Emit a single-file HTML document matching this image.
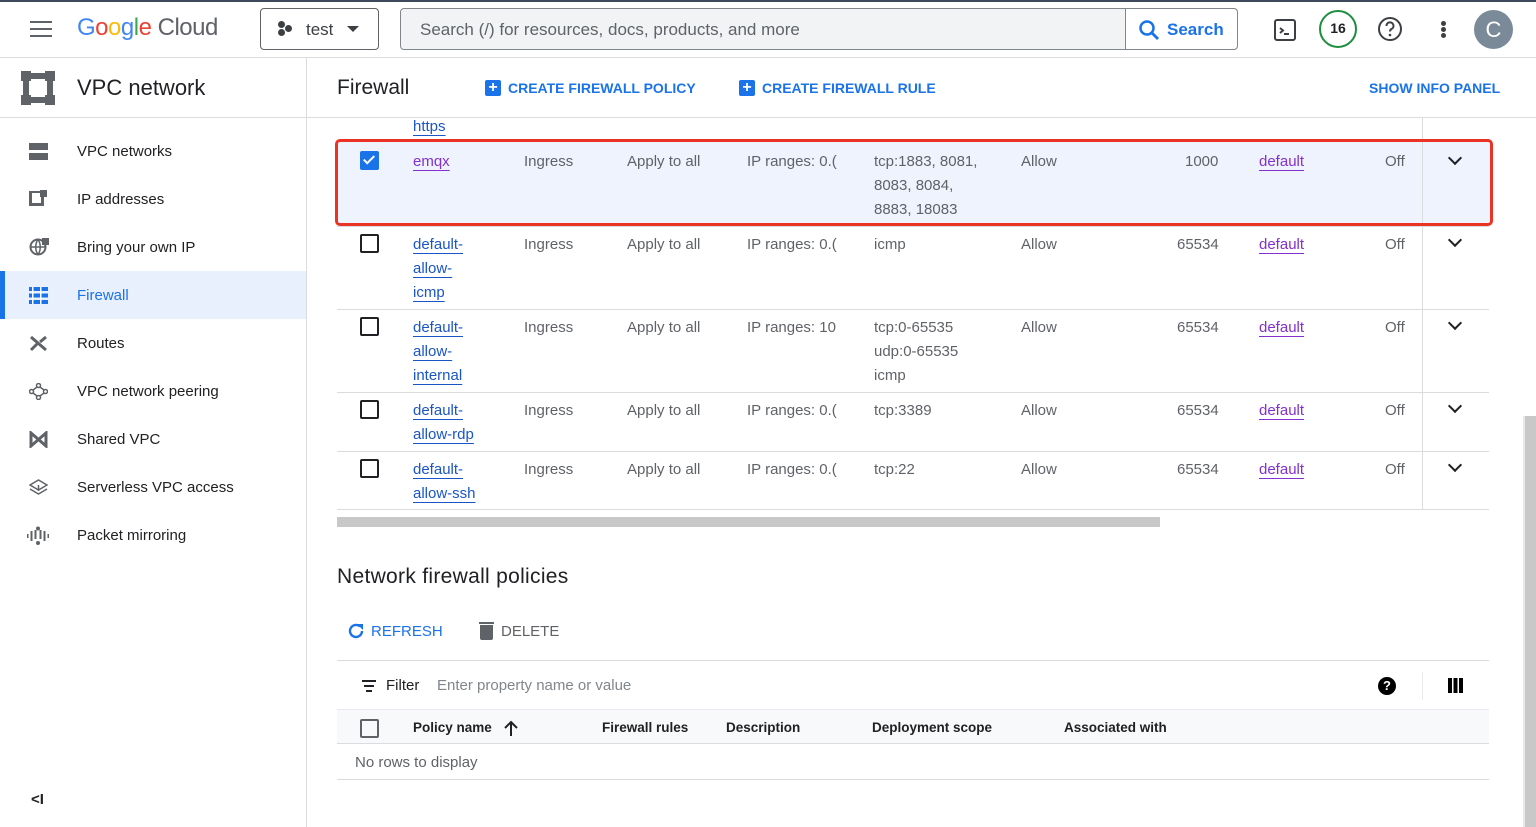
<!DOCTYPE html>
<html><head><meta charset="utf-8"><style>
*{box-sizing:border-box;margin:0;padding:0}
body{width:1536px;height:827px;overflow:hidden;background:#fff;font-family:"Liberation Sans",Arial,sans-serif;color:#202124;position:relative}
.a{position:absolute;white-space:nowrap}
.t{position:absolute;white-space:nowrap;font-size:15px;line-height:24px;color:#5f6368;margin-top:1px}
.lk{color:#1a55c8;text-decoration:underline;text-underline-offset:4px}
.vl{color:#8430ce;text-decoration:underline;text-underline-offset:4px}
.hl{position:absolute;height:1px;background:#dadce0}
.cb{position:absolute;width:19px;height:19px;border:2px solid #202124;border-radius:2px}
.chev{position:absolute;width:10px;height:10px;border-right:2px solid #202124;border-bottom:2px solid #202124;transform:rotate(45deg)}
.nav{position:absolute;left:77px;font-size:15px;color:#202124;margin-top:1px}
.ico{position:absolute;left:29px;width:19px;height:17px}
.bh{position:absolute;white-space:nowrap;font-size:14px;color:#1a73e8;font-weight:bold}
.th{position:absolute;white-space:nowrap;font-size:13.5px;font-weight:bold;color:#202124}
</style></head><body>
<div class="a" style="left:0;top:0;width:1536px;height:2px;background:#3c4a5c"></div>
<!-- top bar -->
<div class="a" style="left:30px;top:21px;width:22px;height:2px;background:#5f6368;box-shadow:0 7px 0 #5f6368,0 14px 0 #5f6368"></div>
<div class="a" style="left:77px;top:14px;font-size:24px;letter-spacing:-0.5px"><span style="color:#4285f4">G</span><span style="color:#ea4335">o</span><span style="color:#fbbc04">o</span><span style="color:#4285f4">g</span><span style="color:#34a853">l</span><span style="color:#ea4335">e</span> <span style="color:#5f6368">Cloud</span></div>
<div class="a" style="left:260px;top:8px;width:119px;height:42px;border:1px solid #5f6368;border-radius:4px"></div>
<div class="a" style="left:278px;top:21px;width:7px;height:7px;border-radius:50%;background:#3c4043;box-shadow:7px 4px 0 #3c4043,0 8px 0 #3c4043"></div>
<div class="a" style="left:306px;top:20px;font-size:17px;color:#3c4043">test</div>
<div class="a" style="left:347px;top:26px;border-left:6px solid transparent;border-right:6px solid transparent;border-top:6px solid #3c4043"></div>
<div class="a" style="left:400px;top:8px;width:838px;height:42px;border:1px solid #80868b;border-radius:4px;background:#f1f3f4"></div>
<div class="a" style="left:1125px;top:9px;width:112px;height:40px;background:#fff;border-left:1px solid #80868b;border-radius:0 4px 4px 0"></div>
<div class="a" style="left:420px;top:20px;font-size:17px;color:#5f6368">Search (/) for resources, docs, products, and more</div>
<svg class="a" style="left:1137px;top:18px" width="24" height="24" viewBox="0 0 24 24"><circle cx="10" cy="10" r="6.5" fill="none" stroke="#1a73e8" stroke-width="2.5"/><line x1="15" y1="15" x2="21" y2="21" stroke="#1a73e8" stroke-width="2.8"/></svg>
<div class="a" style="left:1167px;top:20px;font-size:17px;color:#1a73e8;font-weight:bold">Search</div>
<svg class="a" style="left:1273px;top:18px" width="24" height="24" viewBox="0 0 24 24"><rect x="2" y="2" width="20" height="20" rx="2" fill="none" stroke="#3c4043" stroke-width="2"/><path d="M7 10l3 2.5-3 2.5M11 16h5" stroke="#3c4043" stroke-width="2" fill="none"/></svg>
<div class="a" style="left:1319px;top:10px;width:38px;height:38px;border:2.5px solid #1e8e3e;border-radius:50%;text-align:center;line-height:33px;font-size:14px;font-weight:bold;color:#202124">16</div>
<svg class="a" style="left:1377px;top:16px" width="26" height="26" viewBox="0 0 26 26"><circle cx="13" cy="13" r="11" fill="none" stroke="#3c4043" stroke-width="2"/><path d="M9.5 10a3.5 3.5 0 1 1 5 3c-1.2.7-1.5 1.3-1.5 2.5" fill="none" stroke="#3c4043" stroke-width="2"/><circle cx="13" cy="19" r="1.3" fill="#3c4043"/></svg>
<div class="a" style="left:1441px;top:21px;width:5px;height:5px;border-radius:50%;background:#3c4043;box-shadow:0 6px 0 #3c4043,0 12px 0 #3c4043"></div>
<div class="a" style="left:1474px;top:10px;width:39px;height:39px;border-radius:50%;background:#7a8a98;color:#fff;text-align:center;line-height:39px;font-size:22px">C</div>
<div class="hl" style="left:0;top:57px;width:1536px;background:#dadce0"></div>
<!-- sidebar -->
<div class="a" style="left:306px;top:58px;width:1px;height:769px;background:#dadce0"></div>
<svg class="a" style="left:21px;top:71px" width="34" height="34" viewBox="0 0 34 34" fill="#5f6368"><rect x="0" y="0" width="10" height="10"/><rect x="24" y="0" width="10" height="10"/><rect x="0" y="24" width="10" height="10"/><rect x="24" y="24" width="10" height="10"/><rect x="2" y="10" width="6" height="14"/><rect x="26" y="10" width="6" height="14"/><rect x="10" y="2" width="14" height="6"/><rect x="10" y="26" width="14" height="6"/></svg>
<div class="a" style="left:77px;top:75px;font-size:22px;color:#202124">VPC network</div>
<div class="hl" style="left:0;top:117px;width:306px"></div>
<div class="a" style="left:0;top:271px;width:306px;height:48px;background:#e8f0fe"></div>
<div class="a" style="left:0;top:271px;width:5px;height:48px;background:#1a73e8"></div>
<div class="ico" style="top:143px;border-top:7px solid #5f6368;border-bottom:7px solid #5f6368;height:17px"></div>
<div class="ico" style="top:191px;width:15px;height:15px;border:3px solid #5f6368;border-top-width:2px"></div><div class="a" style="left:40px;top:190px;width:7px;height:7px;background:#5f6368"></div>
<svg class="a" style="left:29px;top:238px" width="20" height="18" viewBox="0 0 20 18"><circle cx="9" cy="9" r="7.5" fill="none" stroke="#5f6368" stroke-width="2"/><path d="M1.5 9h15M9 1.5c-3 4-3 11 0 15M9 1.5c3 4 3 11 0 15" fill="none" stroke="#5f6368" stroke-width="1.5"/><rect x="13" y="0" width="7" height="7" fill="#5f6368"/></svg>
<svg class="a" style="left:29px;top:287px" width="19" height="17" viewBox="0 0 19 17" fill="#1a73e8"><rect x="0" y="0" width="19" height="4"/><rect x="0" y="6.5" width="19" height="4"/><rect x="0" y="13" width="19" height="4"/><rect x="3" y="0" width="1.5" height="17" fill="#fff"/><rect x="11" y="0" width="1.5" height="17" fill="#fff"/></svg>
<svg class="a" style="left:29px;top:335px" width="19" height="17" viewBox="0 0 19 17"><path d="M2 2l15 13M2 15l6-6M11 7l6-5" stroke="#5f6368" stroke-width="3" fill="none"/></svg>
<svg class="a" style="left:29px;top:383px" width="19" height="17" viewBox="0 0 19 17" fill="none" stroke="#5f6368" stroke-width="1.5"><circle cx="9.5" cy="2.5" r="2"/><circle cx="2.5" cy="8.5" r="2"/><circle cx="16.5" cy="8.5" r="2"/><circle cx="9.5" cy="14.5" r="2"/><path d="M8 4L4 7M11 4l4 3M4 10l4 3M15 10l-4 3"/></svg>
<svg class="a" style="left:29px;top:431px" width="19" height="17" viewBox="0 0 19 17"><path d="M2 2v13l7.5-6.5zM17 2v13L9.5 8.5z" fill="none" stroke="#5f6368" stroke-width="3"/></svg>
<svg class="a" style="left:29px;top:479px" width="19" height="17" viewBox="0 0 19 17" fill="none" stroke="#5f6368" stroke-width="1.5"><path d="M9.5 1L18 6l-8.5 5L1 6zM1 10l8.5 5 8.5-5M9.5 12V6"/></svg>
<svg class="a" style="left:27px;top:526px" width="22" height="20" viewBox="0 0 22 20" fill="#5f6368"><rect x="0" y="8" width="1.5" height="4"/><rect x="3.5" y="5" width="2" height="10"/><rect x="7.5" y="4" width="2" height="9"/><circle cx="11" cy="2.5" r="2"/><circle cx="11" cy="17" r="2"/><rect x="12.5" y="4" width="2" height="9"/><rect x="16.5" y="5" width="2" height="10"/><rect x="20.5" y="8" width="1.5" height="4"/></svg>
<div class="nav" style="top:142px">VPC networks</div>
<div class="nav" style="top:190px">IP addresses</div>
<div class="nav" style="top:238px">Bring your own IP</div>
<div class="nav" style="top:286px;color:#1a73e8">Firewall</div>
<div class="nav" style="top:334px">Routes</div>
<div class="nav" style="top:382px">VPC network peering</div>
<div class="nav" style="top:430px">Shared VPC</div>
<div class="nav" style="top:478px">Serverless VPC access</div>
<div class="nav" style="top:526px">Packet mirroring</div>
<div class="a" style="left:31px;top:791px;font-size:15px;color:#202124;font-weight:bold">&lt;I</div>
<!-- main header -->
<div class="a" style="left:337px;top:76px;font-size:21px;color:#202124">Firewall</div>
<div class="a" style="left:485px;top:80px;width:16px;height:16px;background:#1a73e8;border-radius:2px;color:#fff;font-size:16px;line-height:16px;text-align:center;font-weight:bold">+</div>
<div class="bh" style="left:508px;top:80px">CREATE FIREWALL POLICY</div>
<div class="a" style="left:739px;top:80px;width:16px;height:16px;background:#1a73e8;border-radius:2px;color:#fff;font-size:16px;line-height:16px;text-align:center;font-weight:bold">+</div>
<div class="bh" style="left:762px;top:80px">CREATE FIREWALL RULE</div>
<div class="bh" style="left:1369px;top:80px">SHOW INFO PANEL</div>
<div class="hl" style="left:307px;top:117px;width:1229px"></div>
<!-- table -->
<div class="a" style="left:336px;top:140px;width:1155px;height:85px;background:#eef3fd"></div>
<div class="a" style="left:1422px;top:118px;width:1px;height:392px;background:#dadce0"></div>
<div class="t lk" style="left:413px;top:114px">https</div>
<div class="hl" style="left:337px;top:226px;width:1152px"></div>
<div class="hl" style="left:337px;top:309px;width:1152px"></div>
<div class="hl" style="left:337px;top:392px;width:1152px"></div>
<div class="hl" style="left:337px;top:451px;width:1152px"></div>
<div class="hl" style="left:337px;top:509px;width:1152px"></div>
<div class="a" style="left:360px;top:151px;width:19px;height:19px;background:#1a73e8;border-radius:2px"></div>
<div class="a" style="left:366px;top:153px;width:6px;height:11px;border-right:2px solid #fff;border-bottom:2px solid #fff;transform:rotate(45deg)"></div>
<div class="t vl" style="left:413px;top:149px">emqx</div>
<div class="t" style="left:524px;top:149px">Ingress</div><div class="t" style="left:627px;top:149px">Apply to all</div><div class="t" style="left:747px;top:149px">IP ranges: 0.(</div>
<div class="t" style="left:874px;top:149px">tcp:1883, 8081,<br>8083, 8084,<br>8883, 18083</div>
<div class="t" style="left:1021px;top:149px">Allow</div><div class="t" style="left:1185px;top:149px">1000</div><div class="t vl" style="left:1259px;top:149px">default</div><div class="t" style="left:1385px;top:149px">Off</div>
<div class="chev" style="left:1450px;top:153px"></div>
<div class="a" style="left:335px;top:139px;width:1158px;height:87px;border:3px solid #ea3323;border-radius:5px"></div>
<!-- row2 -->
<div class="cb" style="left:360px;top:234px"></div>
<div class="t lk" style="left:413px;top:232px">default-<br>allow-<br>icmp</div>
<div class="t" style="left:524px;top:232px">Ingress</div><div class="t" style="left:627px;top:232px">Apply to all</div><div class="t" style="left:747px;top:232px">IP ranges: 0.(</div>
<div class="t" style="left:874px;top:232px">icmp</div><div class="t" style="left:1021px;top:232px">Allow</div><div class="t" style="left:1177px;top:232px">65534</div><div class="t vl" style="left:1259px;top:232px">default</div><div class="t" style="left:1385px;top:232px">Off</div>
<div class="chev" style="left:1450px;top:235px"></div>
<!-- row3 -->
<div class="cb" style="left:360px;top:317px"></div>
<div class="t lk" style="left:413px;top:315px">default-<br>allow-<br>internal</div>
<div class="t" style="left:524px;top:315px">Ingress</div><div class="t" style="left:627px;top:315px">Apply to all</div><div class="t" style="left:747px;top:315px">IP ranges: 10</div>
<div class="t" style="left:874px;top:315px">tcp:0-65535<br>udp:0-65535<br>icmp</div><div class="t" style="left:1021px;top:315px">Allow</div><div class="t" style="left:1177px;top:315px">65534</div><div class="t vl" style="left:1259px;top:315px">default</div><div class="t" style="left:1385px;top:315px">Off</div>
<div class="chev" style="left:1450px;top:318px"></div>
<!-- row4 -->
<div class="cb" style="left:360px;top:400px"></div>
<div class="t lk" style="left:413px;top:398px">default-<br>allow-rdp</div>
<div class="t" style="left:524px;top:398px">Ingress</div><div class="t" style="left:627px;top:398px">Apply to all</div><div class="t" style="left:747px;top:398px">IP ranges: 0.(</div>
<div class="t" style="left:874px;top:398px">tcp:3389</div><div class="t" style="left:1021px;top:398px">Allow</div><div class="t" style="left:1177px;top:398px">65534</div><div class="t vl" style="left:1259px;top:398px">default</div><div class="t" style="left:1385px;top:398px">Off</div>
<div class="chev" style="left:1450px;top:401px"></div>
<!-- row5 -->
<div class="cb" style="left:360px;top:459px"></div>
<div class="t lk" style="left:413px;top:457px">default-<br>allow-ssh</div>
<div class="t" style="left:524px;top:457px">Ingress</div><div class="t" style="left:627px;top:457px">Apply to all</div><div class="t" style="left:747px;top:457px">IP ranges: 0.(</div>
<div class="t" style="left:874px;top:457px">tcp:22</div><div class="t" style="left:1021px;top:457px">Allow</div><div class="t" style="left:1177px;top:457px">65534</div><div class="t vl" style="left:1259px;top:457px">default</div><div class="t" style="left:1385px;top:457px">Off</div>
<div class="chev" style="left:1450px;top:460px"></div>
<div class="a" style="left:337px;top:517px;width:823px;height:10px;background:#c8c8c8"></div>
<!-- policies -->
<div class="a" style="left:337px;top:565px;font-size:21px;color:#202124;letter-spacing:0.3px">Network firewall policies</div>
<svg class="a" style="left:347px;top:622px" width="18" height="18" viewBox="0 0 18 18"><path d="M15 9a6 6 0 1 1-2-4.5" fill="none" stroke="#1a73e8" stroke-width="2.4"/><path d="M10 2h6v6z" fill="#1a73e8"/></svg>
<div class="a" style="left:371px;top:623px;font-size:15px;color:#1a73e8">REFRESH</div>
<div class="a" style="left:480px;top:625px;width:13px;height:15px;background:#5f6368;border-radius:0 0 2px 2px"></div>
<div class="a" style="left:479px;top:622px;width:15px;height:2px;background:#5f6368"></div>
<div class="a" style="left:501px;top:623px;font-size:15px;color:#5f6368">DELETE</div>
<div class="hl" style="left:337px;top:660px;width:1152px"></div>
<div class="a" style="left:362px;top:680px;width:14px;height:2px;background:#202124"></div>
<div class="a" style="left:364px;top:685px;width:10px;height:2px;background:#202124"></div>
<div class="a" style="left:366px;top:690px;width:6px;height:2px;background:#202124"></div>
<div class="a" style="left:386px;top:677px;font-size:15px;color:#202124">Filter</div>
<div class="a" style="left:437px;top:677px;font-size:15px;color:#80868b">Enter property name or value</div>
<div class="a" style="left:1378px;top:677px;width:18px;height:18px;border-radius:50%;background:#000;color:#fff;font-size:13px;font-weight:bold;text-align:center;line-height:18px">?</div>
<div class="a" style="left:1422px;top:672px;width:1px;height:28px;background:#e8eaed"></div>
<div class="a" style="left:1448px;top:678px;width:15px;height:15px;background:repeating-linear-gradient(90deg,#000 0 4px,#fff 4px 5.5px)"></div>
<div class="a" style="left:337px;top:709px;width:1152px;height:35px;background:#f8f9fa;border-top:1px solid #e8eaed;border-bottom:1px solid #dadce0"></div>
<div class="a" style="left:360px;top:719px;width:19px;height:19px;border:2px solid #5f6368;border-radius:2px"></div>
<div class="th" style="left:413px;top:720px">Policy name</div>
<svg class="a" style="left:503px;top:719px" width="16" height="18" viewBox="0 0 16 18"><path d="M8 17V3M2 9l6-6 6 6" fill="none" stroke="#202124" stroke-width="2"/></svg>
<div class="th" style="left:602px;top:720px">Firewall rules</div>
<div class="th" style="left:726px;top:720px">Description</div>
<div class="th" style="left:872px;top:720px">Deployment scope</div>
<div class="th" style="left:1064px;top:720px">Associated with</div>
<div class="a" style="left:355px;top:754px;font-size:15px;color:#5f6368">No rows to display</div>
<div class="hl" style="left:337px;top:779px;width:1152px"></div>
<!-- scrollbar -->
<div class="a" style="left:1523px;top:416px;width:13px;height:411px;background:#c8c8c8;border-left:2px solid #e8e8e8"></div>
</body></html>
